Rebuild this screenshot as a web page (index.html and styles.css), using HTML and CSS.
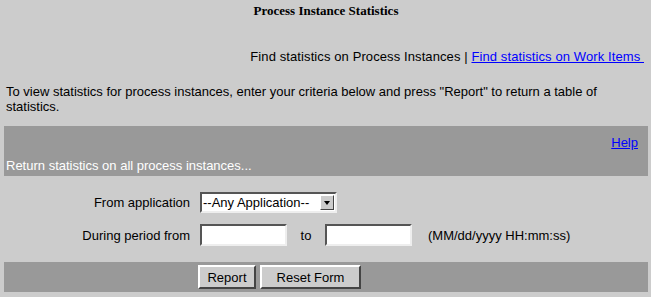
FILE: index.html
```html
<!DOCTYPE html>
<html lang="en">

<head>
    <meta charset="UTF-8">
    <title>Process Instance Statistics</title>
    <link rel="stylesheet" href="styles.css">
</head>

<body>
    <div class="page-title">Process Instance Statistics</div>

    <div class="nav-links">
        Find statistics on Process Instances | <a href="#">Find statistics on Work Items&nbsp;</a>
    </div>

    <p class="intro">To view statistics for process instances, enter your criteria below and press "Report" to return a table of<br>statistics.</p>

    <div class="bar header-bar">
        <div class="help"><a href="#">Help</a></div>
        <div class="bar-caption">Return statistics on all process instances...</div>
    </div>

    <form class="criteria">
        <div class="row">
            <label class="label">From application</label>
            <div class="select-box">
                <span class="select-value">--Any Application--</span>
                <span class="select-arrow"></span>
            </div>
        </div>
        <div class="row">
            <label class="label">During period from</label>
            <input type="text" class="date-field">
            <span class="to">to</span>
            <input type="text" class="date-field">
            <span class="hint">(MM/dd/yyyy HH:mm:ss)</span>
        </div>
    </form>

    <div class="bar button-bar">
        <button class="btn btn-report">Report</button>
        <button class="btn btn-reset">Reset Form</button>
    </div>
</body>

</html>
```

FILE: styles.css
```css
body {
    margin: 0;
    padding: 0 3px 0 4px;
    background: #cccccc;
    color: #000;
    font-family: "Liberation Sans", Arial, sans-serif;
    font-size: 13px;
}

a {
    color: #0000ff;
}

.page-title {
    text-align: center;
    font-family: "Liberation Serif", "Times New Roman", serif;
    font-weight: bold;
    font-size: 13px;
    padding-top: 3px;
    height: 45px;
}

.nav-links {
    text-align: right;
    padding-right: 4px;
    line-height: 18px;
    letter-spacing: 0.1px;
}

.intro {
    margin: 0;
    padding: 18px 2px 0;
    line-height: 15px;
    height: 42px;
}

.bar {
    background: #999999;
}

.header-bar {
    height: 50px;
    display: flex;
    flex-direction: column;
}

.help {
    text-align: right;
    padding: 9px 10px 0 0;
    height: 23px;
}

.bar-caption {
    color: #fff;
    padding-left: 2px;
}

.criteria {
    padding-top: 16px;
    height: 86px;
    box-sizing: border-box;
    display: flex;
    flex-direction: column;
    gap: 11px;
}

.row {
    display: flex;
    align-items: center;
}

.label {
    width: 186px;
    text-align: right;
    padding-right: 10px;
}

.select-box {
    width: 137px;
    height: 21px;
    box-sizing: border-box;
    background: #fff;
    border: 2px solid;
    border-color: #555 #eee #eee #555;
    display: flex;
    align-items: center;
    justify-content: space-between;
    padding-left: 1px;
}

.select-arrow {
    width: 14px;
    height: 15px;
    margin-right: 1px;
    box-sizing: border-box;
    background: #cccccc;
    border: 1px solid;
    border-color: #fff #444 #444 #fff;
    position: relative;
}

.select-arrow::after {
    content: "";
    position: absolute;
    left: 3px;
    top: 5px;
    border-left: 3px solid transparent;
    border-right: 3px solid transparent;
    border-top: 4px solid #000;
}

.date-field {
    width: 87px;
    height: 22px;
    box-sizing: border-box;
    margin: 0;
    background: #fff;
    border: 2px solid;
    border-color: #555 #eee #eee #555;
    font: inherit;
}

.to {
    width: 38px;
    text-align: center;
}

.hint {
    margin-left: 16px;
}

.button-bar {
    height: 30px;
    display: flex;
    align-items: center;
    gap: 4px;
    padding-left: 194px;
}

.btn {
    height: 24px;
    margin: 0;
    padding: 0;
    background: #cccccc;
    border: 2px solid;
    border-color: #fff #444 #444 #fff;
    font: inherit;
    color: #000;
}

.btn-report {
    width: 58px;
}

.btn-reset {
    width: 101px;
}
```
